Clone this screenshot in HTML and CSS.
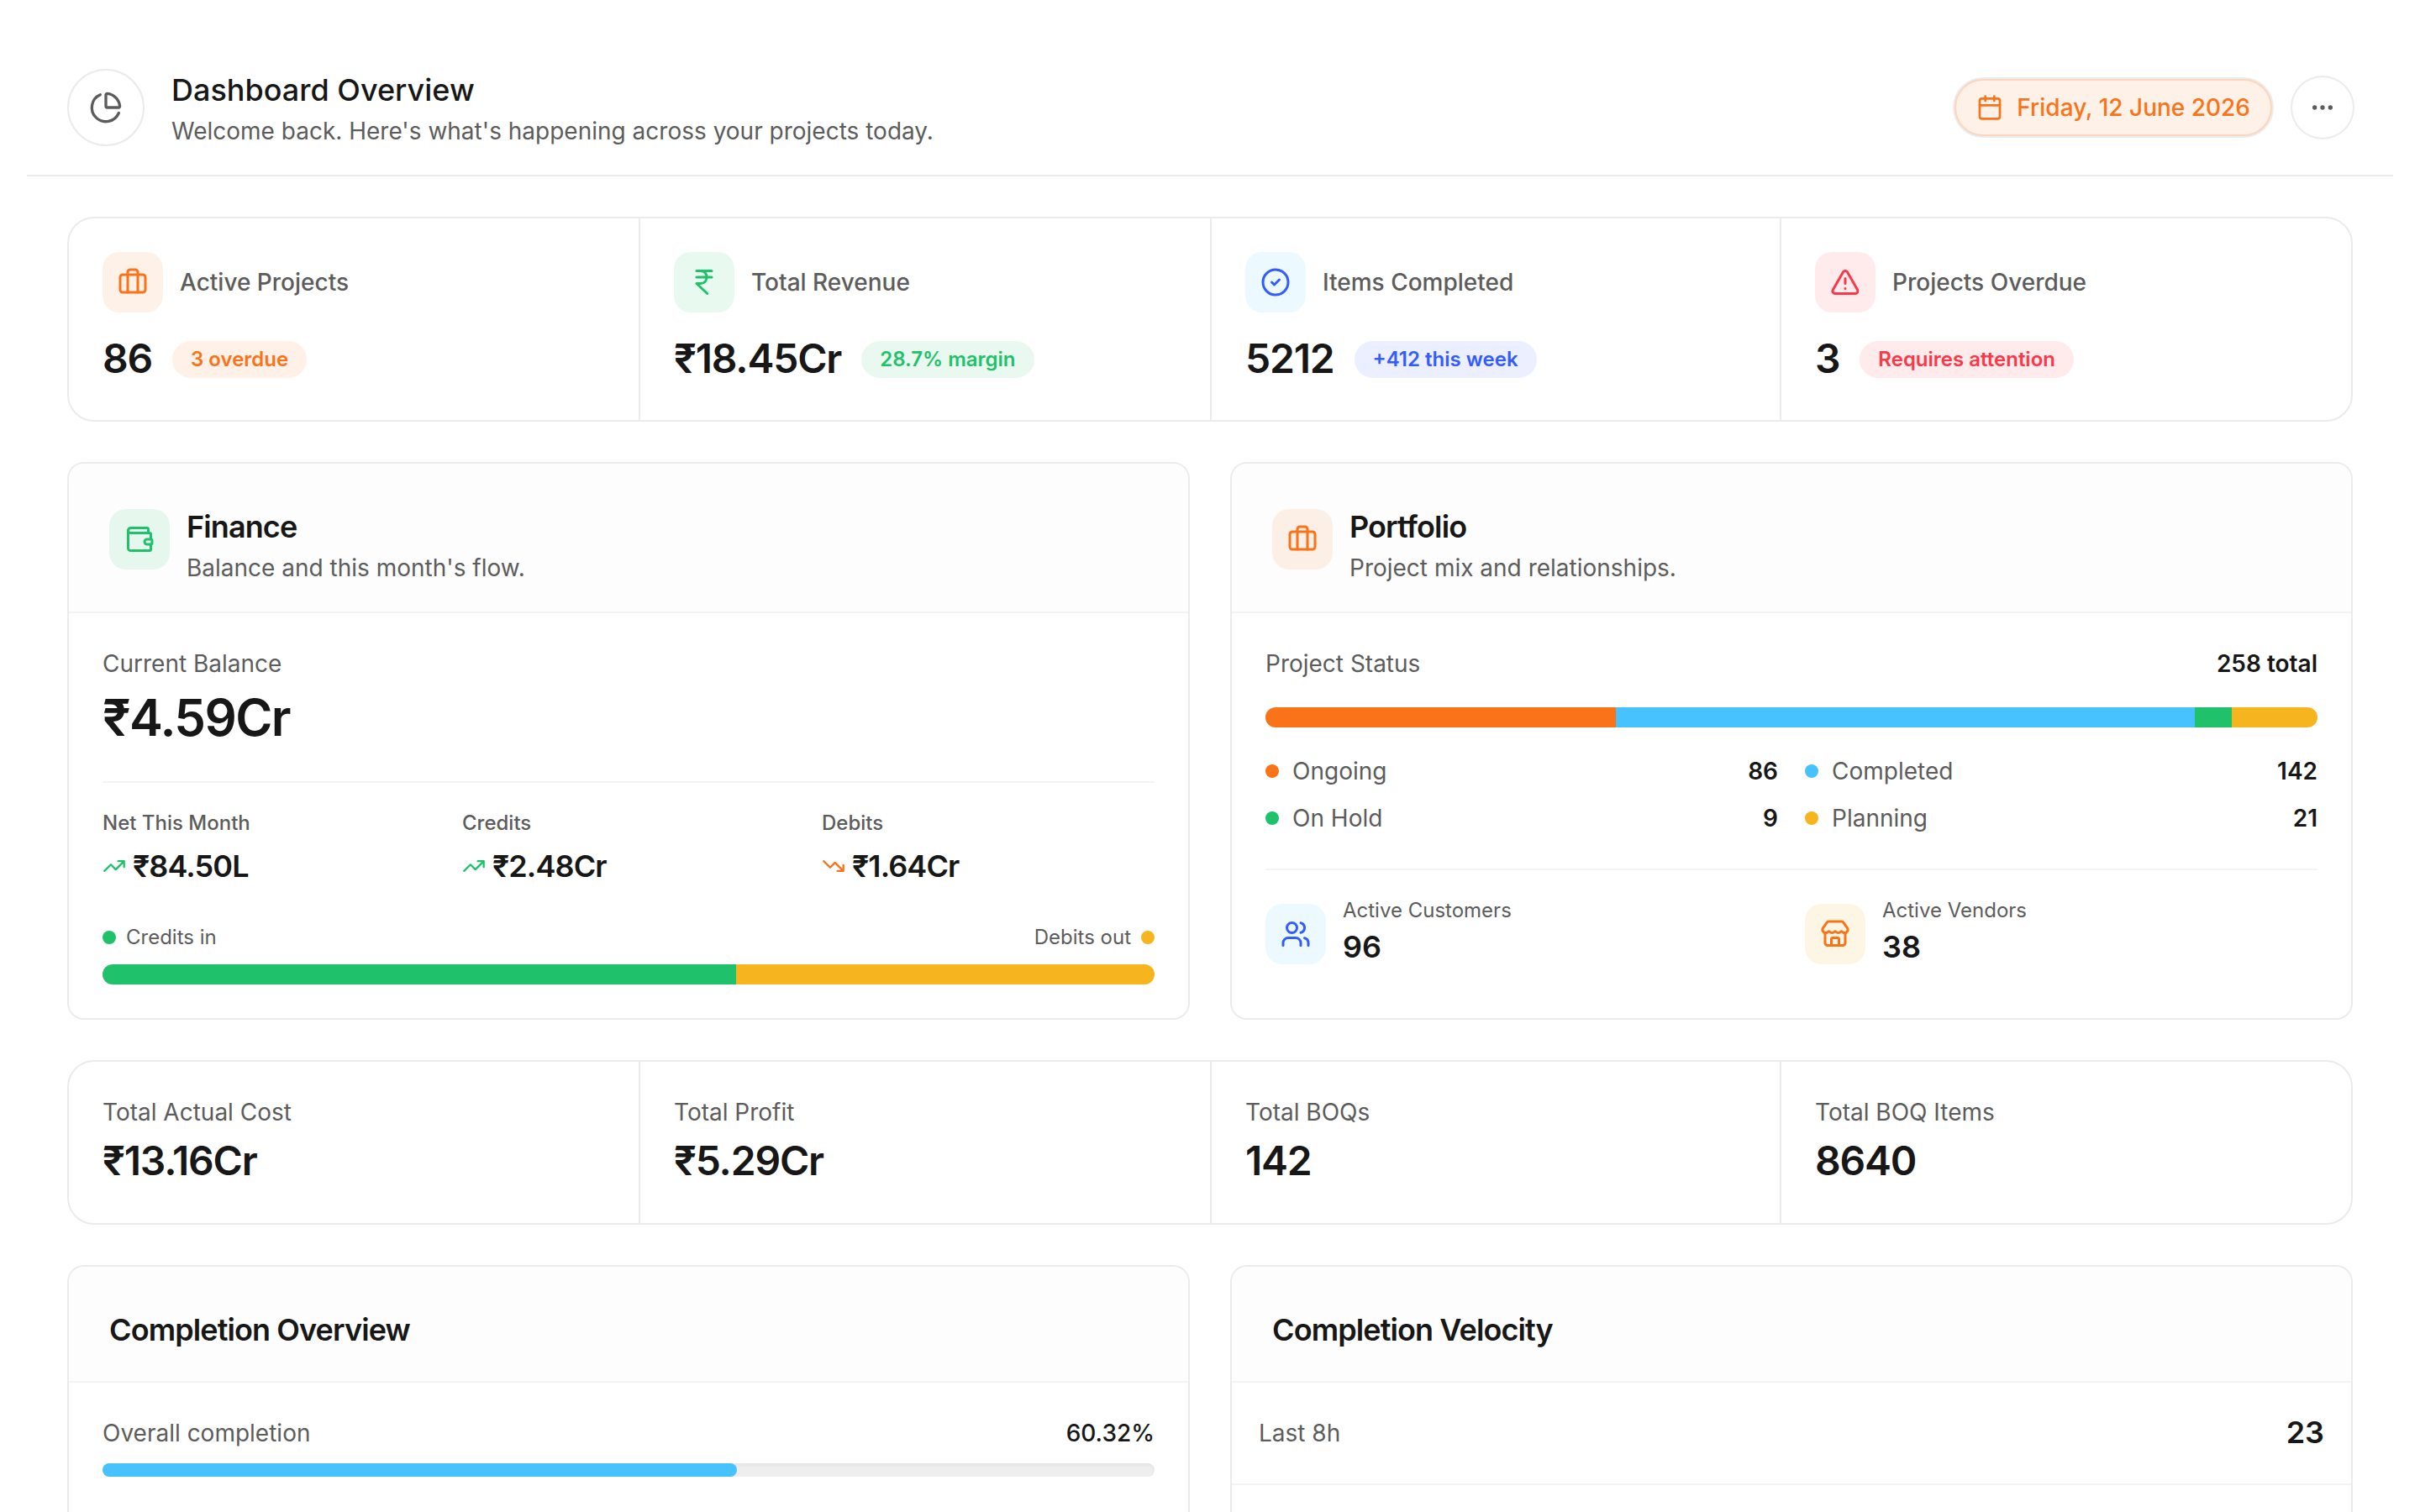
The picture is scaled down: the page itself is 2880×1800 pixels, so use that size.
FILE: index.html
```html
<!DOCTYPE html>
<html lang="en">

<head>
    <meta charset="utf-8">
    <title>Dashboard Overview</title>
    <link rel="stylesheet" href="styles.css">
</head>

<body>
    <!-- icon set -->
    <svg class="sprite" xmlns="http://www.w3.org/2000/svg">
        <symbol id="i-pie" viewBox="0 0 24 24">
            <path d="M21 12c.552 0 1.005-.449.95-.998a10 10 0 0 0-8.953-8.951c-.55-.055-.998.398-.998.95v8a1 1 0 0 0 1 1z" />
            <path d="M21.21 15.89A10 10 0 1 1 8 2.83" />
        </symbol>
        <symbol id="i-calendar" viewBox="0 0 24 24">
            <path d="M8 2v4M16 2v4M3 10h18" />
            <rect x="3" y="4" width="18" height="18" rx="2" />
        </symbol>
        <symbol id="i-more" viewBox="0 0 24 24">
            <circle cx="12" cy="12" r="1" />
            <circle cx="19" cy="12" r="1" />
            <circle cx="5" cy="12" r="1" />
        </symbol>
        <symbol id="i-briefcase" viewBox="0 0 24 24">
            <path d="M16 20V4a2 2 0 0 0-2-2h-4a2 2 0 0 0-2 2v16" />
            <rect x="2" y="6" width="20" height="14" rx="2" />
        </symbol>
        <symbol id="i-rupee" viewBox="0 0 24 24">
            <path d="M6 3h12M6 8h12M6 13l8.5 8M6 13h3M9 13c6.667 0 6.667-10 0-10" />
        </symbol>
        <symbol id="i-check" viewBox="0 0 24 24">
            <circle cx="12" cy="12" r="10" />
            <path d="m9 12 2 2 4-4" />
        </symbol>
        <symbol id="i-alert" viewBox="0 0 24 24">
            <path d="m21.73 18-8-14a2 2 0 0 0-3.48 0l-8 14A2 2 0 0 0 4 21h16a2 2 0 0 0 1.73-3" />
            <path d="M12 9v4M12 17h.01" />
        </symbol>
        <symbol id="i-wallet" viewBox="0 0 24 24">
            <path d="M19 7V4a1 1 0 0 0-1-1H5a2 2 0 0 0 0 4h15a1 1 0 0 1 1 1v4h-3a2 2 0 0 0 0 4h3a1 1 0 0 0 1-1v-2a1 1 0 0 0-1-1" />
            <path d="M3 5v14a2 2 0 0 0 2 2h15a1 1 0 0 0 1-1v-4" />
        </symbol>
        <symbol id="i-up" viewBox="0 0 24 24">
            <path d="M16 7h6v6M22 7l-8.5 8.5-5-5L2 17" />
        </symbol>
        <symbol id="i-down" viewBox="0 0 24 24">
            <path d="M16 17h6v-6M22 17l-8.5-8.5-5 5L2 7" />
        </symbol>
        <symbol id="i-users" viewBox="0 0 24 24">
            <path d="M16 21v-2a4 4 0 0 0-4-4H6a4 4 0 0 0-4 4v2" />
            <circle cx="9" cy="7" r="4" />
            <path d="M22 21v-2a4 4 0 0 0-3-3.87M16 3.13a4 4 0 0 1 0 7.75" />
        </symbol>
        <symbol id="i-store" viewBox="0 0 24 24">
            <path d="M15 21v-5a1 1 0 0 0-1-1h-4a1 1 0 0 0-1 1v5" />
            <path d="M17.774 10.31a1.12 1.12 0 0 0-1.549 0 2.5 2.5 0 0 1-3.451 0 1.12 1.12 0 0 0-1.548 0 2.5 2.5 0 0 1-3.452 0 1.12 1.12 0 0 0-1.549 0 2.5 2.5 0 0 1-3.77-3.248l2.889-4.184A2 2 0 0 1 7 2h10a2 2 0 0 1 1.653.873l2.895 4.192a2.5 2.5 0 0 1-3.774 3.244" />
            <path d="M4 10.95V19a2 2 0 0 0 2 2h12a2 2 0 0 0 2-2v-8.05" />
        </symbol>
    </svg>

    <header class="header">
        <div class="header-icon"><svg class="icon icon-lg"><use href="#i-pie" /></svg></div>
        <div class="header-text">
            <h1 class="page-title">Dashboard Overview</h1>
            <p class="desc">Welcome back. Here's what's happening across your projects today.</p>
        </div>
        <div class="date"><svg class="icon icon-md"><use href="#i-calendar" /></svg><span>Friday, 12 June 2026</span></div>
        <button class="more" type="button"><svg class="icon icon-md"><use href="#i-more" /></svg></button>
    </header>

    <main class="main">
        <section class="stats">
            <div class="stat">
                <div class="stat-head">
                    <span class="tile orange"><svg class="icon"><use href="#i-briefcase" /></svg></span>
                    <span class="stat-label">Active Projects</span>
                </div>
                <div class="stat-row"><span class="stat-value">86</span><span class="badge badge-orange">3 overdue</span></div>
            </div>
            <div class="stat">
                <div class="stat-head">
                    <span class="tile green"><svg class="icon"><use href="#i-rupee" /></svg></span>
                    <span class="stat-label">Total Revenue</span>
                </div>
                <div class="stat-row"><span class="stat-value">₹18.45Cr</span><span class="badge badge-green">28.7% margin</span></div>
            </div>
            <div class="stat">
                <div class="stat-head">
                    <span class="tile blue"><svg class="icon"><use href="#i-check" /></svg></span>
                    <span class="stat-label">Items Completed</span>
                </div>
                <div class="stat-row"><span class="stat-value">5212</span><span class="badge badge-blue">+412 this week</span></div>
            </div>
            <div class="stat">
                <div class="stat-head">
                    <span class="tile red"><svg class="icon"><use href="#i-alert" /></svg></span>
                    <span class="stat-label">Projects Overdue</span>
                </div>
                <div class="stat-row"><span class="stat-value">3</span><span class="badge badge-red">Requires attention</span></div>
            </div>
        </section>

        <div class="cards">
            <section class="card">
                <div class="card-head">
                    <span class="tile green"><svg class="icon"><use href="#i-wallet" /></svg></span>
                    <div>
                        <h2 class="card-title">Finance</h2>
                        <p class="desc">Balance and this month's flow.</p>
                    </div>
                </div>
                <div class="card-body">
                    <p class="label">Current Balance</p>
                    <p class="balance">₹4.59Cr</p>
                    <div class="flow">
                        <div>
                            <p class="small strong">Net This Month</p>
                            <p class="amount"><svg class="icon icon-sm up"><use href="#i-up" /></svg>₹84.50L</p>
                        </div>
                        <div>
                            <p class="small strong">Credits</p>
                            <p class="amount"><svg class="icon icon-sm up"><use href="#i-up" /></svg>₹2.48Cr</p>
                        </div>
                        <div>
                            <p class="small strong">Debits</p>
                            <p class="amount"><svg class="icon icon-sm down"><use href="#i-down" /></svg>₹1.64Cr</p>
                        </div>
                    </div>
                    <div class="between">
                        <span class="key small"><i class="dot bg-green"></i>Credits in</span>
                        <span class="key small">Debits out<i class="dot bg-yellow"></i></span>
                    </div>
                    <div class="bar flow-bar">
                        <span class="bg-green" style="width: 60.2%"></span>
                        <span class="bg-yellow" style="width: 39.8%"></span>
                    </div>
                </div>
            </section>

            <section class="card">
                <div class="card-head">
                    <span class="tile orange"><svg class="icon"><use href="#i-briefcase" /></svg></span>
                    <div>
                        <h2 class="card-title">Portfolio</h2>
                        <p class="desc">Project mix and relationships.</p>
                    </div>
                </div>
                <div class="card-body">
                    <div class="between">
                        <span class="label">Project Status</span>
                        <span class="count">258 total</span>
                    </div>
                    <div class="bar status-bar">
                        <span class="bg-orange" style="width: 33.33%"></span>
                        <span class="bg-sky" style="width: 55.04%"></span>
                        <span class="bg-green" style="width: 3.49%"></span>
                        <span class="bg-yellow" style="width: 8.14%"></span>
                    </div>
                    <div class="legend">
                        <div class="legend-item"><i class="dot bg-orange"></i><span class="label">Ongoing</span><span class="count">86</span></div>
                        <div class="legend-item"><i class="dot bg-sky"></i><span class="label">Completed</span><span class="count">142</span></div>
                        <div class="legend-item"><i class="dot bg-green"></i><span class="label">On Hold</span><span class="count">9</span></div>
                        <div class="legend-item"><i class="dot bg-yellow"></i><span class="label">Planning</span><span class="count">21</span></div>
                    </div>
                    <div class="people">
                        <div class="person">
                            <span class="tile blue"><svg class="icon"><use href="#i-users" /></svg></span>
                            <div>
                                <p class="small">Active Customers</p>
                                <p class="number">96</p>
                            </div>
                        </div>
                        <div class="person">
                            <span class="tile yellow"><svg class="icon"><use href="#i-store" /></svg></span>
                            <div>
                                <p class="small">Active Vendors</p>
                                <p class="number">38</p>
                            </div>
                        </div>
                    </div>
                </div>
            </section>
        </div>

        <section class="stats totals">
            <div class="stat">
                <p class="label">Total Actual Cost</p>
                <p class="stat-value">₹13.16Cr</p>
            </div>
            <div class="stat">
                <p class="label">Total Profit</p>
                <p class="stat-value">₹5.29Cr</p>
            </div>
            <div class="stat">
                <p class="label">Total BOQs</p>
                <p class="stat-value">142</p>
            </div>
            <div class="stat">
                <p class="label">Total BOQ Items</p>
                <p class="stat-value">8640</p>
            </div>
        </section>

        <div class="cards last">
            <section class="card">
                <div class="card-head">
                    <h2 class="card-title">Completion Overview</h2>
                </div>
                <div class="card-body">
                    <div class="between">
                        <span class="label">Overall completion</span>
                        <span class="percent">60.32%</span>
                    </div>
                    <div class="progress"><span style="width: 60.32%"></span></div>
                </div>
            </section>
            <section class="card">
                <div class="card-head">
                    <h2 class="card-title">Completion Velocity</h2>
                </div>
                <div class="velocity-row">
                    <span class="label">Last 8h</span>
                    <span class="number">23</span>
                </div>
            </section>
        </div>
    </main>
</body>

</html>
```

FILE: styles.css
```css
* {
    box-sizing: border-box;
    margin: 0;
    padding: 0;
}

html,
body {
    height: 100%;
    overflow: hidden;
}

body {
    display: flex;
    flex-direction: column;
    padding: 32px 32px 0;
    background: #fff;
    color: #171717;
    font-family: Inter, "Liberation Sans", sans-serif;
    font-size: 28px;
    line-height: 40px;
}

.sprite {
    display: none;
}

/* icons */
.icon {
    display: block;
    flex: none;
    width: 36px;
    height: 36px;
    fill: none;
    stroke: currentColor;
    stroke-width: 2;
    stroke-linecap: round;
    stroke-linejoin: round;
}

.icon-lg {
    width: 40px;
    height: 40px;
}

.icon-md {
    width: 32px;
    height: 32px;
}

.icon-sm {
    width: 28px;
    height: 28px;
}

.up {
    color: #1fc16b;
}

.down {
    color: #fa7319;
}

.tile {
    display: flex;
    flex: none;
    align-items: center;
    justify-content: center;
    width: 72px;
    height: 72px;
    border-radius: 20px;
}

.orange {
    color: #fa7319;
    background: rgba(250, 115, 25, 0.1);
}

.green {
    color: #1fc16b;
    background: rgba(31, 193, 107, 0.1);
}

.blue {
    color: #335cff;
    background: rgba(71, 194, 255, 0.1);
}

.red {
    color: #fb3748;
    background: rgba(251, 55, 72, 0.1);
}

.yellow {
    color: #fa7319;
    background: rgba(246, 181, 30, 0.12);
}

.bg-orange {
    background: #fa7319;
}

.bg-green {
    background: #1fc16b;
}

.bg-sky {
    background: #47c2ff;
}

.bg-yellow {
    background: #f6b51e;
}

/* header */
.header {
    display: flex;
    flex: none;
    align-items: center;
    height: 178px;
    padding: 48px 48px 32px;
    border-bottom: 2px solid #ebebeb;
}

.header-icon {
    display: flex;
    align-items: center;
    justify-content: center;
    width: 92px;
    height: 92px;
    border: 2px solid #ebebeb;
    border-radius: 50%;
    color: #5c5c5c;
}

.header-text {
    flex: 1;
    padding-left: 32px;
}

.page-title {
    margin-bottom: 2px;
    font-size: 36px;
    font-weight: 500;
    line-height: 54px;
}

.desc,
.label {
    color: #5c5c5c;
}

.date {
    display: flex;
    align-items: center;
    gap: 16px;
    height: 68px;
    padding: 0 24px;
    border: 2px solid #fdd5ba;
    border-radius: 34px;
    background: #fef1e8;
    box-shadow: 0 0 0 2px #ebebeb;
    color: #fa7319;
    font-weight: 500;
}

.more {
    display: flex;
    align-items: center;
    justify-content: center;
    width: 72px;
    height: 72px;
    margin-left: 24px;
    border: 0;
    border-radius: 50%;
    background: #fff;
    box-shadow: 0 0 0 2px #ebebeb;
    color: #5c5c5c;
}

.main {
    display: flex;
    flex: 1;
    flex-direction: column;
    gap: 48px;
    min-height: 0;
    padding: 48px 48px 0;
    overflow: hidden;
}

/* stats */
.stats {
    display: grid;
    grid-template-columns: 678px 680px 678px 1fr;
    flex: none;
    height: 244px;
    border: 2px solid #ebebeb;
    border-radius: 32px;
}

.stat {
    padding: 40px;
}

.stat + .stat {
    border-left: 2px solid #ebebeb;
}

.stat-head {
    display: flex;
    align-items: center;
    gap: 20px;
    margin-bottom: 24px;
}

.stat-label {
    color: #5c5c5c;
    font-weight: 500;
}

.stat-row {
    display: flex;
    align-items: center;
    gap: 24px;
    height: 64px;
}

.stat-value {
    margin-top: -3px;
    font-size: 48px;
    font-weight: 600;
    line-height: 64px;
    letter-spacing: -0.025em;
}

.badge {
    height: 44px;
    padding: 0 22px;
    border-radius: 22px;
    font-size: 24px;
    font-weight: 600;
    line-height: 44px;
}

.badge-orange {
    color: #fa7319;
    background: #fff1e8;
}

.badge-green {
    color: #1fc16b;
    background: #e9f9f0;
}

.badge-blue {
    color: #335cff;
    background: #ebefff;
}

.badge-red {
    color: #fb3748;
    background: #ffebec;
}

.totals {
    height: 196px;
}

.totals .stat-value {
    margin-top: 6px;
}

/* cards */
.cards {
    display: grid;
    flex: none;
    grid-template-columns: 1fr 1fr;
    gap: 48px;
}

.card {
    border: 2px solid #ebebeb;
    border-radius: 20px;
    overflow: hidden;
}

.last {
    flex: 1;
    min-height: 0;
}

.last .card {
    border-bottom: 0;
    border-radius: 20px 20px 0 0;
}

.card-head {
    display: flex;
    gap: 20px;
    padding: 48px 48px 32px;
    border-bottom: 2px solid #f3f3f3;
    background: #fdfdfd;
}

.card-head .tile {
    margin-top: 6px;
}

.card-title {
    margin-bottom: 2px;
    font-size: 36px;
    font-weight: 600;
    line-height: 54px;
    letter-spacing: -0.025em;
}

.card-body {
    padding: 40px;
}

.between {
    display: flex;
    align-items: center;
    justify-content: space-between;
}

.balance {
    margin-top: 8px;
    font-size: 60px;
    font-weight: 600;
    line-height: 72px;
    letter-spacing: -0.027em;
}

.small {
    color: #5c5c5c;
    font-size: 24px;
    line-height: 32px;
}

.strong {
    font-weight: 500;
}

.flow {
    display: grid;
    grid-template-columns: repeat(3, 1fr);
    gap: 32px;
    margin: 40px 0 42px;
    padding-top: 32px;
    border-top: 2px solid #f3f3f3;
}

.amount {
    display: flex;
    align-items: center;
    gap: 8px;
    margin-top: 8px;
    font-size: 36px;
    font-weight: 600;
    line-height: 54px;
    letter-spacing: -0.025em;
}

.key {
    display: flex;
    align-items: center;
    gap: 12px;
}

.dot {
    flex: none;
    width: 16px;
    height: 16px;
    border-radius: 50%;
}

.bar {
    display: flex;
    height: 24px;
    border-radius: 12px;
    overflow: hidden;
}

.flow-bar {
    margin-top: 16px;
}

.status-bar {
    margin: 32px 0;
}

.count {
    font-weight: 600;
}

.legend {
    display: grid;
    grid-template-columns: 1fr 1fr;
    gap: 16px 32px;
}

.legend-item {
    display: flex;
    align-items: center;
    gap: 16px;
}

.legend-item .count {
    margin-left: auto;
}

.people {
    display: grid;
    grid-template-columns: 1fr 1fr;
    gap: 32px;
    margin-top: 40px;
    padding-top: 32px;
    border-top: 2px solid #f3f3f3;
}

.person {
    display: flex;
    gap: 20px;
}

.person .tile {
    margin-top: 8px;
}

.number {
    font-size: 36px;
    font-weight: 600;
    line-height: 54px;
}

/* completion */
.percent {
    font-weight: 500;
}

.progress {
    height: 16px;
    margin-top: 16px;
    border-radius: 8px;
    background: #eee;
    box-shadow: inset 0 2px 4px rgba(0, 0, 0, 0.05);
}

.progress span {
    display: block;
    height: 100%;
    border-radius: 8px;
    background: #47c2ff;
}

.velocity-row {
    display: flex;
    align-items: center;
    justify-content: space-between;
    height: 122px;
    padding: 0 32px;
    border-bottom: 2px solid #f3f3f3;
}

.velocity-row .number {
    margin-top: -2px;
}
```
